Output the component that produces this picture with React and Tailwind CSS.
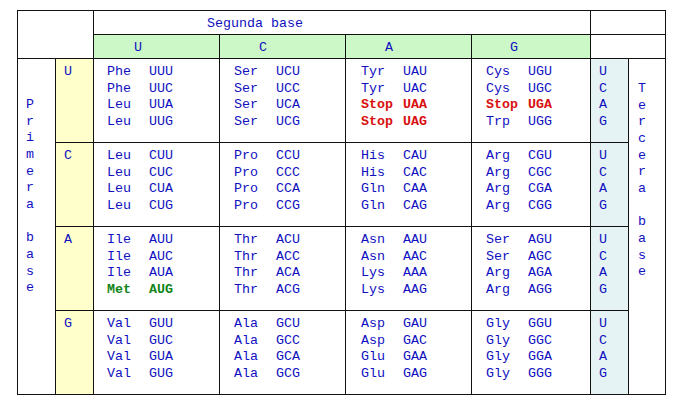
import React from 'react';

const bases = ['U', 'C', 'A', 'G'];

const rows = [
  [
    [['Phe', 'UUU'], ['Phe', 'UUC'], ['Leu', 'UUA'], ['Leu', 'UUG']],
    [['Ser', 'UCU'], ['Ser', 'UCC'], ['Ser', 'UCA'], ['Ser', 'UCG']],
    [['Tyr', 'UAU'], ['Tyr', 'UAC'], ['Stop', 'UAA', 'stop'], ['Stop', 'UAG', 'stop']],
    [['Cys', 'UGU'], ['Cys', 'UGC'], ['Stop', 'UGA', 'stop'], ['Trp', 'UGG']],
  ],
  [
    [['Leu', 'CUU'], ['Leu', 'CUC'], ['Leu', 'CUA'], ['Leu', 'CUG']],
    [['Pro', 'CCU'], ['Pro', 'CCC'], ['Pro', 'CCA'], ['Pro', 'CCG']],
    [['His', 'CAU'], ['His', 'CAC'], ['Gln', 'CAA'], ['Gln', 'CAG']],
    [['Arg', 'CGU'], ['Arg', 'CGC'], ['Arg', 'CGA'], ['Arg', 'CGG']],
  ],
  [
    [['Ile', 'AUU'], ['Ile', 'AUC'], ['Ile', 'AUA'], ['Met', 'AUG', 'start']],
    [['Thr', 'ACU'], ['Thr', 'ACC'], ['Thr', 'ACA'], ['Thr', 'ACG']],
    [['Asn', 'AAU'], ['Asn', 'AAC'], ['Lys', 'AAA'], ['Lys', 'AAG']],
    [['Ser', 'AGU'], ['Ser', 'AGC'], ['Arg', 'AGA'], ['Arg', 'AGG']],
  ],
  [
    [['Val', 'GUU'], ['Val', 'GUC'], ['Val', 'GUA'], ['Val', 'GUG']],
    [['Ala', 'GCU'], ['Ala', 'GCC'], ['Ala', 'GCA'], ['Ala', 'GCG']],
    [['Asp', 'GAU'], ['Asp', 'GAC'], ['Glu', 'GAA'], ['Glu', 'GAG']],
    [['Gly', 'GGU'], ['Gly', 'GGC'], ['Gly', 'GGA'], ['Gly', 'GGG']],
  ],
];

const headPad = ['pl-[40px]', 'pl-[39px]', 'pl-[39px]', 'pl-[38px]'];
const cellPad = ['pl-[13px]', 'pl-[14px]', 'pl-[15px]', 'pl-[14px]'];

const lineColor = (kind) => {
  if (kind === 'stop') return 'text-[#d81010] font-bold';
  if (kind === 'start') return 'text-[#12861a] font-bold';
  return 'text-[#1010c0]';
};

const Vertical = ({ text }) => (
  <div className="flex flex-col">
    {text.split('').map((ch, i) => (
      <span key={i} className="h-[16.67px]">{ch === ' ' ? '\u00a0' : ch}</span>
    ))}
  </div>
);

export default function App() {
  return (
    <div className="w-[682px] h-[398px] bg-white pt-[10px] pl-[17px] font-['Liberation_Mono','Courier_New',monospace] text-[13.33px] leading-[16.67px] text-[#1010c0]">
      <div className="grid w-fit grid-cols-[37px_37px_125px_125px_125px_118px_37px_36px] grid-rows-[23px_23px_83px_83px_83px_83px] gap-px bg-[#111] p-px">
        <div className="col-span-2 row-span-2 bg-white" />
        <div className="col-span-4 bg-white flex items-center pl-[113px] pt-[3px]">Segunda base</div>
        <div className="col-span-2 bg-white" />

        {bases.map((b, i) => (
          <div key={b} className={`bg-[#ccf7c6] flex items-center pt-[3px] ${headPad[i]}`}>{b}</div>
        ))}
        <div className="col-span-2 bg-white" />

        {rows.map((row, r) => (
          <React.Fragment key={r}>
            {r === 0 && (
              <div className="row-span-4 bg-white pl-[8px] pt-[38px]">
                <Vertical text="Primera base" />
              </div>
            )}
            <div className="bg-[#ffffcc] pl-[8px] pt-[5px]">{bases[r]}</div>
            {row.map((cell, c) => (
              <div key={c} className={`bg-white pt-[5px] ${cellPad[c]}`}>
                {cell.map(([aa, codon, kind], k) => (
                  <div key={k} className={`flex h-[16.67px] ${lineColor(kind)}`}>
                    <span className="w-[42px]">{aa}</span>
                    <span>{codon}</span>
                  </div>
                ))}
              </div>
            ))}
            <div className="bg-[#e6f3f5] pl-[8px] pt-[5px]">
              {bases.map((b) => (
                <div key={b} className="h-[16.67px]">{b}</div>
              ))}
            </div>
            {r === 0 && (
              <div className="row-span-4 bg-white pl-[9px] pt-[22px]">
                <Vertical text="Tercera base" />
              </div>
            )}
          </React.Fragment>
        ))}
      </div>
    </div>
  );
}
